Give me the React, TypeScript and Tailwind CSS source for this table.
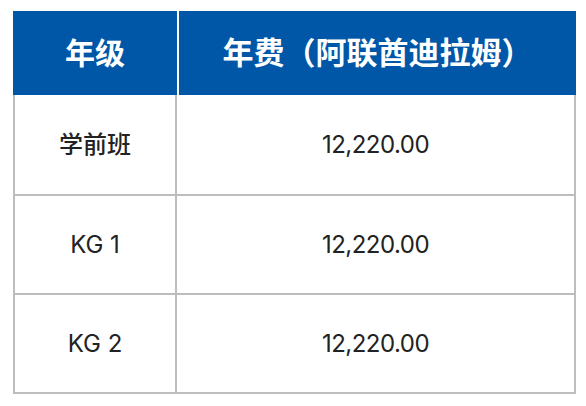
const rows = [
  { grade: '学前班', fee: '12,220.00', cjk: true },
  { grade: 'KG 1', fee: '12,220.00', cjk: false },
  { grade: 'KG 2', fee: '12,220.00', cjk: false },
]

const font = { fontFamily: 'Inter, "Noto Sans CJK SC", sans-serif' }

export default function App() {
  return (
    <div className="min-h-[406px] bg-white pl-[13px] pt-[11px]" style={font}>
      <div className="w-[563px]">
        <div className="flex h-[84px] bg-[#0057a8] text-white">
          <div className="flex w-[164px] items-center justify-center text-[30px] font-bold">年级</div>
          <div className="w-[2px] bg-white" />
          <div className="flex flex-1 items-center justify-center text-[31px] font-bold">
            年费（阿联酋迪拉姆）
          </div>
        </div>
        <div className="border-x-2 border-b-2 border-[#bdbdbd]">
          {rows.map((r, i) => (
            <div
              key={i}
              className={`flex h-[99px] ${i > 0 ? 'border-t-2 border-[#bdbdbd]' : ''}`}
            >
              <div
                className={`flex w-[162px] items-center justify-center border-r-2 border-[#bdbdbd] text-[24px] text-[#222] ${r.cjk ? 'font-medium' : 'font-normal'}`}
              >
                {r.grade}
              </div>
              <div className="flex flex-1 items-center justify-center text-[24px] tracking-[-0.5px] text-[#222]">
                {r.fee}
              </div>
            </div>
          ))}
        </div>
      </div>
    </div>
  )
}
